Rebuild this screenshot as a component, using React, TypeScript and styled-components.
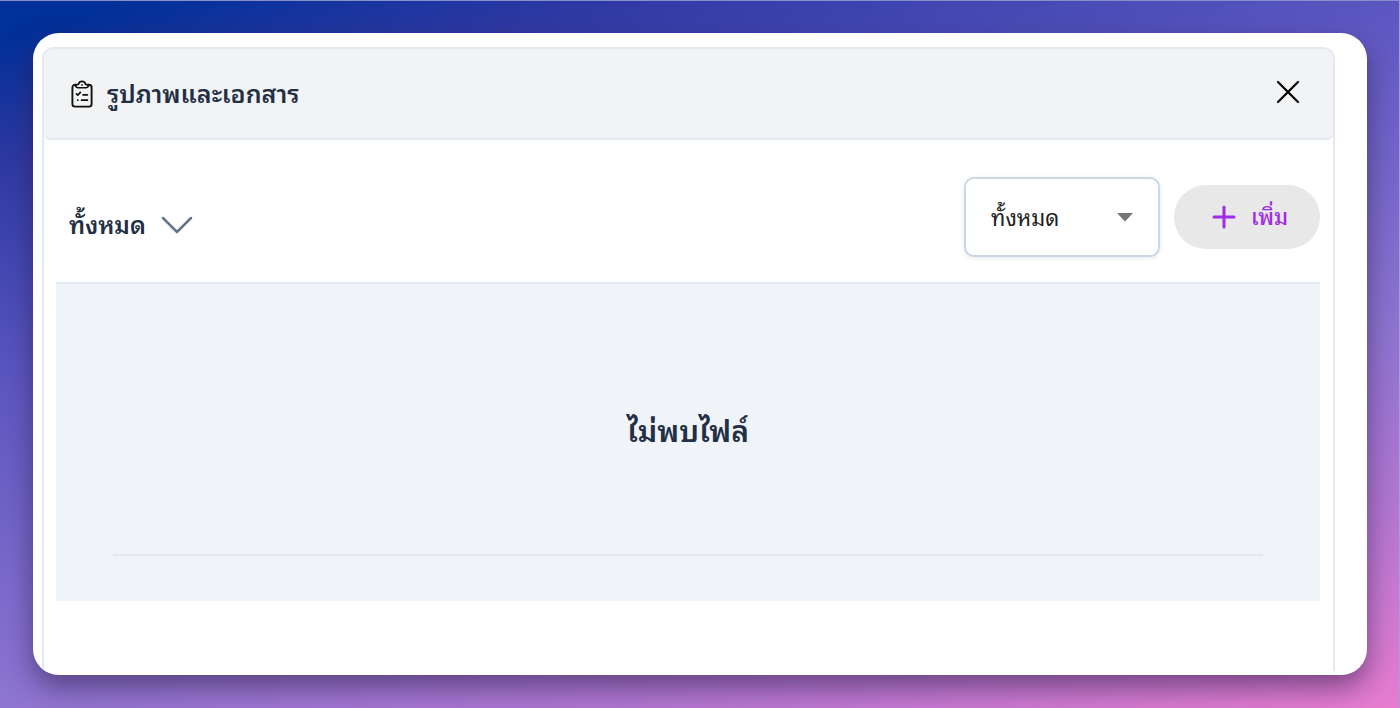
import React from "react";
import styled, { createGlobalStyle } from "styled-components";

const GlobalStyle = createGlobalStyle`
  *, *::before, *::after { box-sizing: border-box; }
  body {
    margin: 0;
    font-family: "Noto Sans Thai Looped", "Noto Sans Thai", "Noto Sans", "Liberation Sans", sans-serif;
    color: #222f44;
  }
  button, select { font: inherit; color: inherit; }
`;

const Page = styled.div`
  display: flex;
  min-height: 100vh;
  padding: 32px 32px 33px 33px;
  border-top: 1px solid #8790cc;
  border-right: 1px solid #a99be0;
  background: linear-gradient(165deg, #003099 3%, #2f39a4 15%, #4247b2 24%, #5e58c2 36%, #8c74d1 64%, #b577d2 82%, #e87ccf 100%);
`;

const Shadow = styled.div`
  display: flex;
  flex: 1;
  border-radius: 26px;
  box-shadow: 0 12px 28px rgba(40, 25, 65, 0.55);
`;

const Window = styled.main`
  display: flex;
  flex: 1;
  padding: 14px 32px 4px 9px;
  border-radius: 26px;
  overflow: hidden;
  background: #fff;
`;

const Card = styled.section`
  flex: 1;
  border: 2px solid #e4e9f1;
  border-bottom: 0;
  border-radius: 12px 12px 0 0;
`;

const CardHeader = styled.header`
  display: flex;
  align-items: center;
  justify-content: space-between;
  height: 91px;
  padding: 0 33px 0 27px;
  border-bottom: 2px solid #e4e9f1;
  border-radius: 10px 10px 6px 6px;
  background: #f2f3f5;
`;

const Title = styled.h1`
  display: flex;
  align-items: center;
  gap: 14px;
  margin: 0;
  font-size: 25px;
  line-height: 40px;
  font-weight: 600;
`;

const Label = styled.span`
  padding-bottom: 4px;
`;

const CloseButton = styled.button`
  display: flex;
  padding: 0 0 4px;
  border: 0;
  background: none;
  color: #000;
  cursor: pointer;
`;

const Body = styled.div`
  padding: 0 13px 0 12px;
`;

const Toolbar = styled.div`
  display: flex;
  align-items: center;
  justify-content: space-between;
  padding: 37px 0 25px 13px;
`;

const GroupToggle = styled.button`
  display: flex;
  align-items: center;
  gap: 15px;
  padding: 16px 0 0;
  border: 0;
  background: none;
  font-size: 24px;
  line-height: 40px;
  font-weight: 600;
  cursor: pointer;
`;

const Actions = styled.div`
  display: flex;
  align-items: center;
  gap: 14px;
`;

const SelectField = styled.div`
  position: relative;
  width: 196px;
`;

const Select = styled.select`
  display: block;
  width: 100%;
  height: 80px;
  padding: 0 48px 2px 25px;
  border: 2px solid #cdd8e6;
  border-radius: 10px;
  background: #fff;
  box-shadow: 0 1px 4px rgba(30, 50, 80, 0.12);
  color: #222;
  font-size: 22px;
  appearance: none;
`;

const SelectArrow = styled.svg`
  position: absolute;
  top: 36px;
  right: 27px;
  pointer-events: none;
`;

const AddButton = styled.button`
  display: flex;
  align-items: center;
  justify-content: center;
  gap: 15px;
  width: 146px;
  height: 64px;
  padding: 0 0 0 6px;
  border: 0;
  border-radius: 32px;
  background: #e8e8e8;
  color: #a02be6;
  font-size: 22px;
  font-weight: 500;
  cursor: pointer;
`;

const EmptyState = styled.div`
  padding: 0 57px 45px;
  border-top: 2px solid #e2e8f0;
  background: #f0f3f8;
`;

const EmptyMessage = styled.p`
  margin: 0;
  padding: 124px 0 104px;
  border-bottom: 2px solid #e2e7f0;
  font-size: 30px;
  line-height: 42px;
  font-weight: 600;
  text-align: center;
`;

const ClipboardIcon = () => (
  <svg width="22" height="28" viewBox="0 0 22 28" fill="none" stroke="#111" strokeWidth="1.9" strokeLinecap="round" strokeLinejoin="round" aria-hidden="true">
    <path d="M5 4.800H4A2.600 2.600 0 0 0 1.400 7.400V24A2.600 2.600 0 0 0 4 26.600h14a2.600 2.600 0 0 0 2.600-2.600V7.400A2.600 2.600 0 0 0 18 4.800h-1" />
    <path d="M7.600 4.100C8 2.300 9.400 1.400 11 1.400s3 .9 3.400 2.700c1.500.1 2.600 1 3 2.300-.6 1-1.300 1.400-2.400 1.400H7c-1.100 0-1.800-.4-2.400-1.400.4-1.300 1.500-2.200 3-2.300z" strokeWidth="1.600" />
    <path d="M11 4.800v.1M5.400 13.800l1.400 1.300 2.600-2.800M12 14.800h4.400M6.700 20.200h.1M10.600 20.200h5.800" strokeWidth="1.700" />
  </svg>
);

const CloseIcon = () => (
  <svg width="24" height="24" viewBox="0 0 24 24" fill="none" stroke="currentColor" strokeWidth="2.200" strokeLinecap="round" aria-hidden="true">
    <path d="M2 2l20 20M22 2L2 22" />
  </svg>
);

const ChevronIcon = () => (
  <svg width="32" height="18" viewBox="0 0 32 18" fill="none" stroke="#64748b" strokeWidth="2.500" strokeLinecap="round" strokeLinejoin="round" aria-hidden="true">
    <path d="M2 2l14 14L30 2" />
  </svg>
);

const PlusIcon = () => (
  <svg width="24" height="24" viewBox="0 0 24 24" fill="none" stroke="currentColor" strokeWidth="3" strokeLinecap="round" aria-hidden="true">
    <path d="M12 2v20M2 12h20" />
  </svg>
);

export default function App() {
  return (
    <>
      <GlobalStyle />
      <Page>
        <Shadow>
          <Window>
            <Card>
              <CardHeader>
                <Title>
                  <ClipboardIcon />
                  <Label>รูปภาพและเอกสาร</Label>
                </Title>
                <CloseButton type="button" aria-label="ปิด">
                  <CloseIcon />
                </CloseButton>
              </CardHeader>
              <Body>
                <Toolbar>
                  <GroupToggle type="button" aria-expanded="true">
                    <Label>ทั้งหมด</Label>
                    <ChevronIcon />
                  </GroupToggle>
                  <Actions>
                    <SelectField>
                      <Select aria-label="ประเภทไฟล์" defaultValue="all">
                        <option value="all">ทั้งหมด</option>
                      </Select>
                      <SelectArrow width="16" height="9" viewBox="0 0 16 9" fill="#757575" aria-hidden="true">
                        <path d="M0 0h16L8 8.500z" />
                      </SelectArrow>
                    </SelectField>
                    <AddButton type="button">
                      <PlusIcon />
                      <Label>เพิ่ม</Label>
                    </AddButton>
                  </Actions>
                </Toolbar>
                <EmptyState>
                  <EmptyMessage>ไม่พบไฟล์</EmptyMessage>
                </EmptyState>
              </Body>
            </Card>
          </Window>
        </Shadow>
      </Page>
    </>
  );
}
